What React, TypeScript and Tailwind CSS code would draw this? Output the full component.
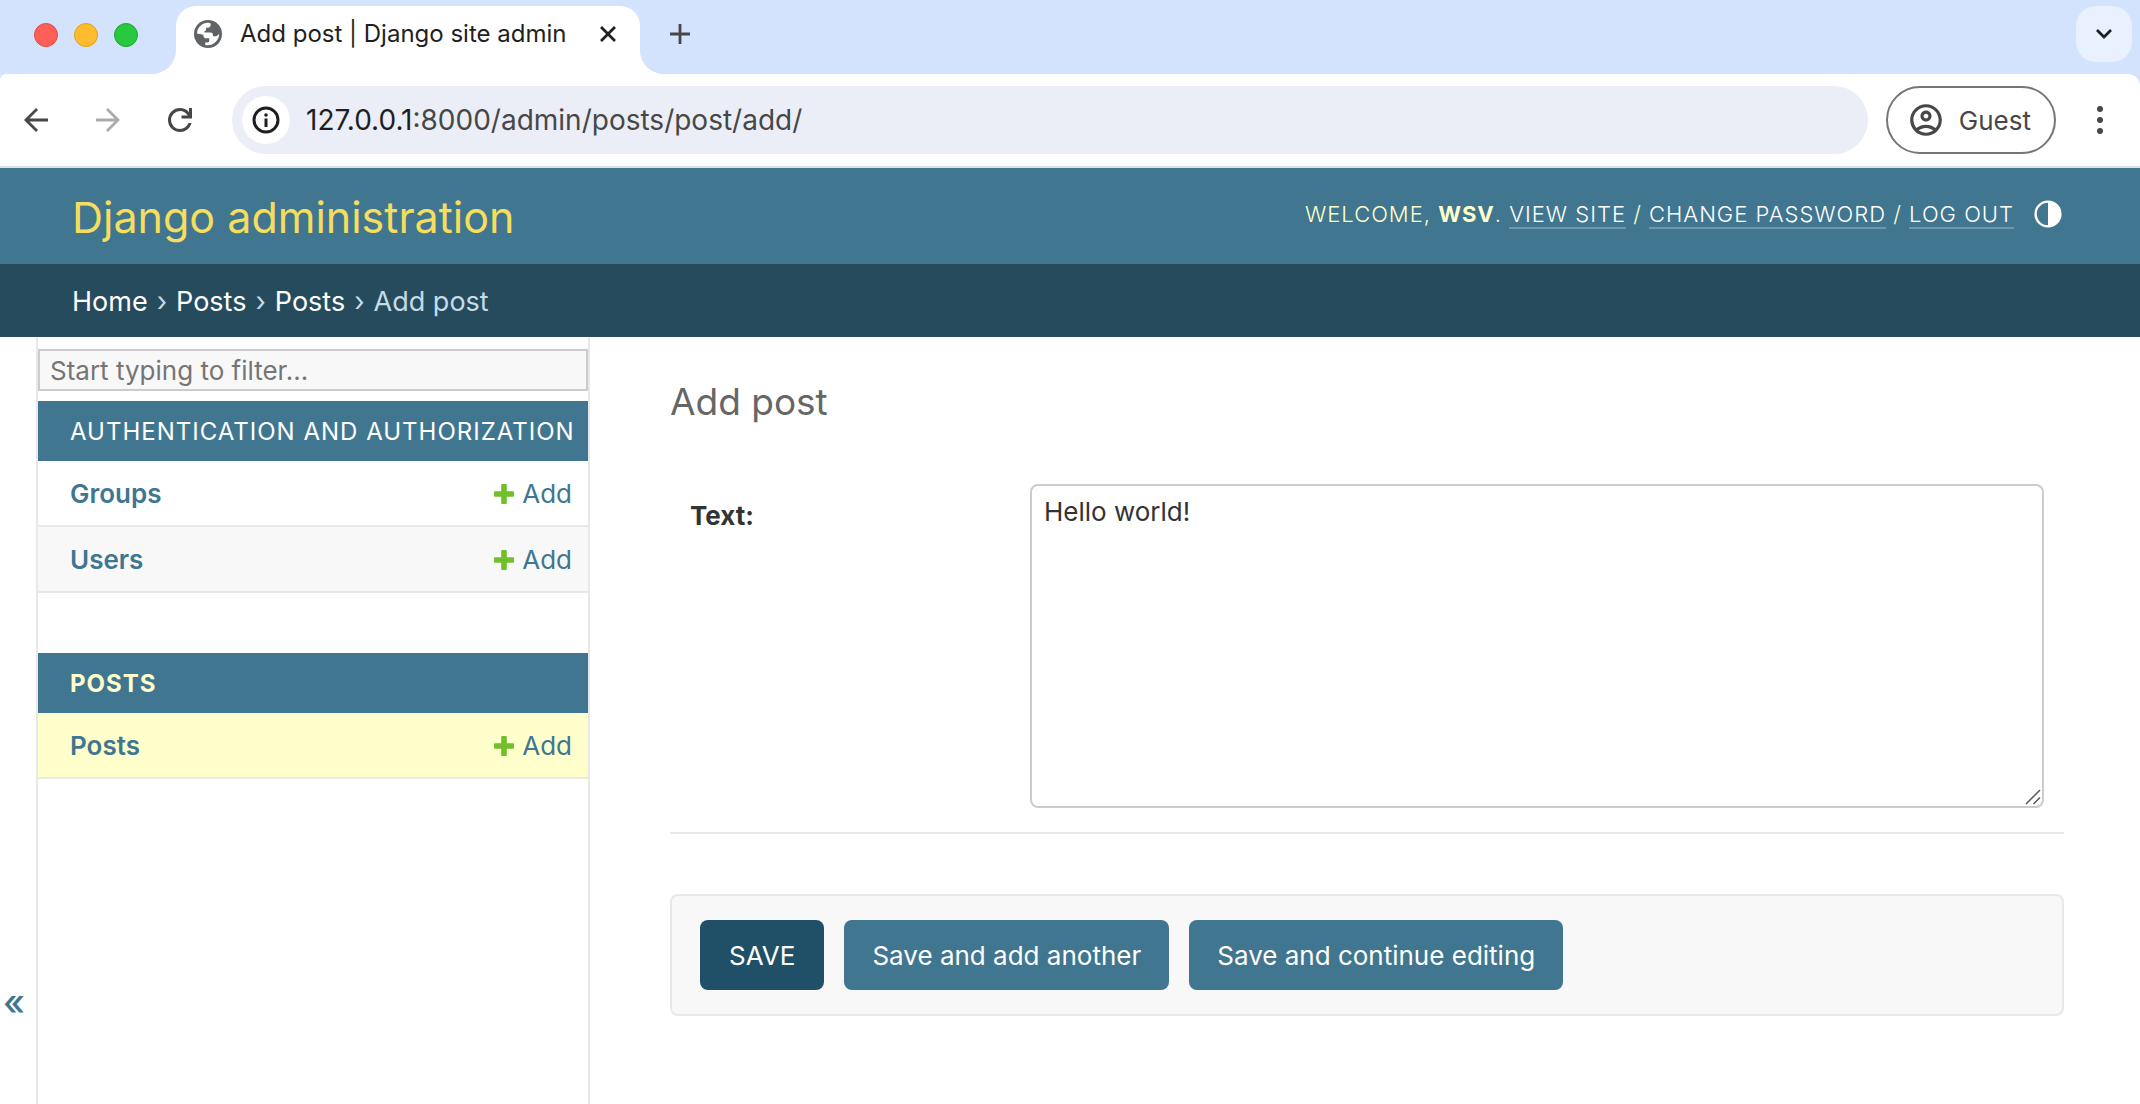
import React, { useState } from "react";
import { MdOutlineAccountCircle } from "react-icons/md";

function TabFlare({ side }: { side: "left" | "right" }) {
  return (
    <svg viewBox="0 0 24 24" className="h-6 w-6 shrink-0 self-end" aria-hidden="true">
      <path d={side === "left" ? "M24 0V24H0C13.3 24 24 13.3 24 0Z" : "M0 0V24H24C10.7 24 0 13.3 0 0Z"} fill="#fff" />
    </svg>
  );
}

function LineIcon({ d, className }: { d: string; className: string }) {
  return (
    <svg viewBox="0 0 32 32" className={className} fill="none" stroke="currentColor" strokeWidth="2.8" aria-hidden="true">
      <path d={d} />
    </svg>
  );
}

function Globe() {
  return (
    <svg viewBox="0 0 28 28" className="size-7" aria-hidden="true">
      <circle cx="14" cy="14" r="14" fill="#5f6368" />
      <path
        d="M3 13.500C3.200 8 7.500 3.300 13 2.800C14.500 2.700 16 3 16.600 3.400V5C16.600 6.800 15.400 7.800 13.700 7.800H12V9.600C12 10.600 11.300 11.200 10.400 11.200V12.600H16.300C18.300 12.600 19 13.600 19 15.200V16.300H21.500C23 16.300 24 15.300 25.200 13.500C25.400 19.500 20.500 25.200 14 25.200C12.500 25.200 11.200 24.900 11.200 24.900V22.500H13.200C14.700 22.500 15.300 21.500 15.300 20.200V18.300H12.200C10.600 18.300 9.400 17.200 9.400 15.700V14.700Z"
        fill="#fff"
      />
    </svg>
  );
}

function TabStrip() {
  return (
    <div className="flex h-[74px] bg-[#d3e2fd]">
      <div className="flex w-[152px] items-center gap-4 pb-1 pl-[34px]">
        <span className="h-6 w-6 rounded-full border border-[#e24b41] bg-[#ff5f57]" />
        <span className="h-6 w-6 rounded-full border border-[#e1a116] bg-[#febc2e]" />
        <span className="h-6 w-6 rounded-full border border-[#1aab29] bg-[#28c840]" />
      </div>
      <TabFlare side="left" />
      <div className="mt-[6px] flex h-[68px] w-[464px] items-center rounded-t-[20px] bg-white pr-4 pb-3 pl-[18px]">
        <Globe />
        <span className="ml-[18px] flex-1 text-[24px] leading-8 whitespace-nowrap text-[#1f1f1f]">Add post | Django site admin</span>
        <button aria-label="Close tab" className="text-[#1f1f1f]"><LineIcon d="M9 9L23 23M23 9L9 23" className="size-8" /></button>
      </div>
      <TabFlare side="right" />
      <button aria-label="New tab" className="self-center pb-[6px] text-[#474747]"><LineIcon d="M16 6V26M6 16H26" className="size-8" /></button>
      <button aria-label="Search tabs" className="mt-[6px] mr-2 ml-auto flex size-14 items-center justify-center rounded-[20px] bg-[#e9f0fe] text-[#1f1f1f]">
        <LineIcon d="M9 12L16 19L23 12" className="size-8" />
      </button>
    </div>
  );
}

function Toolbar() {
  return (
    <div className="bg-[#d3e2fd]">
      <div className="flex h-[94px] items-center rounded-tl-md rounded-tr-xl border-b-2 border-[#dfe1e1] bg-white pr-[22px] pl-5 text-[#474747]">
        <button aria-label="Back"><LineIcon d="M28 16H6M17 5L6 16L17 27" className="size-8" /></button>
        <button aria-label="Forward" className="ml-10 text-[#ababab]"><LineIcon d="M4 16H26M15 5L26 16L15 27" className="size-8" /></button>
        <button aria-label="Reload" className="ml-[38px]">
          <svg viewBox="0 -960 960 960" className="size-9" fill="currentColor" aria-hidden="true">
            <path d="M480-160q-134 0-227-93t-93-227q0-134 93-227t227-93q69 0 132 28.500T720-690v-110h80v280H520v-80h168q-32-56-87.500-88T480-720q-100 0-170 70t-70 170q0 100 70 170t170 70q77 0 139-44t87-116h84q-28 106-114 173t-196 67Z" />
          </svg>
        </button>
        <div className="ml-[34px] flex h-[68px] flex-1 items-center rounded-full bg-[#ebeef7] pl-[10px]">
          <button aria-label="Site information" className="flex size-12 items-center justify-center rounded-full bg-white text-[#1f1f1f]">
            <svg viewBox="0 0 32 32" className="size-8" aria-hidden="true">
              <circle cx="16" cy="16" r="12" fill="none" stroke="currentColor" strokeWidth="3" />
              <rect x="14.500" y="14.500" width="3" height="8.500" fill="currentColor" />
              <circle cx="16" cy="11" r="1.800" fill="currentColor" />
            </svg>
          </button>
          <div className="ml-4 text-[28px] leading-9"><span className="text-[#1f1f1f]">127.0.0.1</span>:8000/admin/posts/post/add/</div>
        </div>
        <button className="ml-[18px] flex h-[68px] items-center gap-[14px] rounded-full border-2 border-[#747775] pr-[23px] pl-[19px] text-[26px]">
          <MdOutlineAccountCircle className="size-[38px]" />
          Guest
        </button>
        <button aria-label="Menu" className="ml-[26px]">
          <svg viewBox="0 0 36 36" className="size-9" fill="currentColor" aria-hidden="true">
            <circle cx="18" cy="7" r="3" /><circle cx="18" cy="18" r="3" /><circle cx="18" cy="29" r="3" />
          </svg>
        </button>
      </div>
    </div>
  );
}

function HeaderLink({ children }: { children: React.ReactNode }) {
  return <a href="#" className="border-b-2 border-white/25 text-white">{children}</a>;
}

function Header() {
  return (
    <header className="flex h-24 items-center justify-between bg-[#417690] pr-[78px] pl-[72px] text-[#ffc]">
      <div className="pt-0.5 text-[43px] leading-[56px] text-[#f5dd5d]"><a href="#">Django administration</a></div>
      <div className="flex items-center pb-1">
        <div className="text-[22px] leading-7 font-light tracking-[1px] uppercase">
          Welcome, <strong className="font-bold">wsv</strong>. <HeaderLink>View site</HeaderLink> / <HeaderLink>Change password</HeaderLink> / <HeaderLink>Log out</HeaderLink>
        </div>
        <button aria-label="Toggle theme" className="ml-5">
          <svg viewBox="0 0 28 28" className="size-7"><circle cx="14" cy="14" r="12.4" fill="none" stroke="#fff" strokeWidth="2.4" /><path d="M14 1a13 13 0 0 1 0 26z" fill="#fff" /></svg>
        </button>
      </div>
    </header>
  );
}

function Breadcrumbs() {
  return (
    <nav aria-label="Breadcrumbs" className="flex h-[73px] items-center gap-[9px] bg-[#264b5d] px-[72px] pt-0.5 text-[27px] leading-9 text-[#c4dce8]">
      <a href="#" className="text-white">Home</a><span>›</span>
      <a href="#" className="text-white">Posts</a><span>›</span>
      <a href="#" className="text-white">Posts</a><span>›</span>
      <span>Add post</span>
    </nav>
  );
}

function ModelRow({ name, tone }: { name: string; tone: string }) {
  return (
    <tr className={`flex h-[66px] items-center border-b-2 border-[#e8e8e8] pt-0.5 ${tone}`}>
      <th scope="row" className="flex-1 pl-8 text-left font-semibold"><a href="#">{name}</a></th>
      <td className="pr-4">
        <a href="#" className="flex items-center gap-2">
          <svg viewBox="0 0 20 20" className="size-5" aria-hidden="true">
            <rect x="7.200" width="5.600" height="20" rx="1" fill="#70bf2b" />
            <rect y="7.200" width="20" height="5.600" rx="1" fill="#70bf2b" />
          </svg>
          Add
        </a>
      </td>
    </tr>
  );
}

function Sidebar() {
  return (
    <nav aria-label="Sidebar" className="w-[554px] shrink-0 border-x-2 border-[#e8e8e8] pt-3 text-[26px] leading-9 text-[#417690]">
      <input aria-label="Filter navigation items" placeholder="Start typing to filter..." className="mb-[10px] block h-[42px] w-full border-2 border-[#ccc] bg-[#f8f8f8] px-[10px] placeholder:text-[#757575]" />
      <table className="mb-[60px] block">
        <caption className="flex h-[60px] items-center bg-[#417690] pt-0.5 pl-8 text-[24px] tracking-[1px] whitespace-nowrap text-white uppercase"><a href="#">Authentication and Authorization</a></caption>
        <tbody className="block">
          <ModelRow name="Groups" tone="bg-white" />
          <ModelRow name="Users" tone="bg-[#f8f8f8]" />
        </tbody>
      </table>
      <table className="block">
        <caption className="flex h-[60px] items-center bg-[#417690] pt-0.5 pl-8 text-[24px] font-bold tracking-[1px] text-[#ffc] uppercase"><a href="#">Posts</a></caption>
        <tbody className="block">
          <ModelRow name="Posts" tone="bg-[#ffc]" />
        </tbody>
      </table>
    </nav>
  );
}

function PostForm() {
  const [text, setText] = useState("Hello world!");
  return (
    <main className="flex-1 pt-10 pr-[76px] pb-[88px] pl-20">
      <h1 className="mb-[57px] text-[37px] leading-[50px] text-[#666]">Add post</h1>
      <form onSubmit={(e) => e.preventDefault()}>
        <div className="flex border-b-2 border-[#e8e8e8] pr-5 pb-6 pl-5">
          <label htmlFor="id_text" className="w-[340px] shrink-0 pt-[14px] text-[26px] leading-9 font-bold text-[#333]">Text:</label>
          <div className="relative flex flex-1">
            <textarea id="id_text" value={text} onChange={(e) => setText(e.target.value)} className="block h-[324px] flex-1 rounded-lg border-2 border-[#ccc] px-3 py-[10px] text-[26px] leading-[32px] text-[#333]" />
            <svg viewBox="0 0 16 16" className="pointer-events-none absolute right-[3px] bottom-[3px] size-4 rounded-br bg-white" fill="none" stroke="#555" strokeWidth="1.5" aria-hidden="true">
              <path d="M1 15L15 1M8.500 15L15 8.500" />
            </svg>
          </div>
        </div>
        <div className="mt-[60px] flex gap-5 rounded-lg border-2 border-[#e8e8e8] bg-[#f8f8f8] px-7 py-6 text-[26px] leading-[30px] text-white">
          <button className="rounded-lg bg-[#205067] px-[29px] pt-[21px] pb-[19px]">SAVE</button>
          <button className="rounded-lg bg-[#417690] px-7 pt-[21px] pb-[19px]">Save and add another</button>
          <button className="rounded-lg bg-[#417690] px-7 pt-[21px] pb-[19px]">Save and continue editing</button>
        </div>
      </form>
    </main>
  );
}

export default function App() {
  return (
    <div className="flex min-h-screen flex-col bg-white font-[Inter,sans-serif]">
      <TabStrip />
      <Toolbar />
      <Header />
      <Breadcrumbs />
      <div className="flex flex-1">
        <button aria-label="Toggle navigation" className="flex w-9 shrink-0 items-end pb-[84px] pl-[3px] text-[36px] leading-9 font-medium text-[#417690]">«</button>
        <Sidebar />
        <PostForm />
      </div>
    </div>
  );
}
